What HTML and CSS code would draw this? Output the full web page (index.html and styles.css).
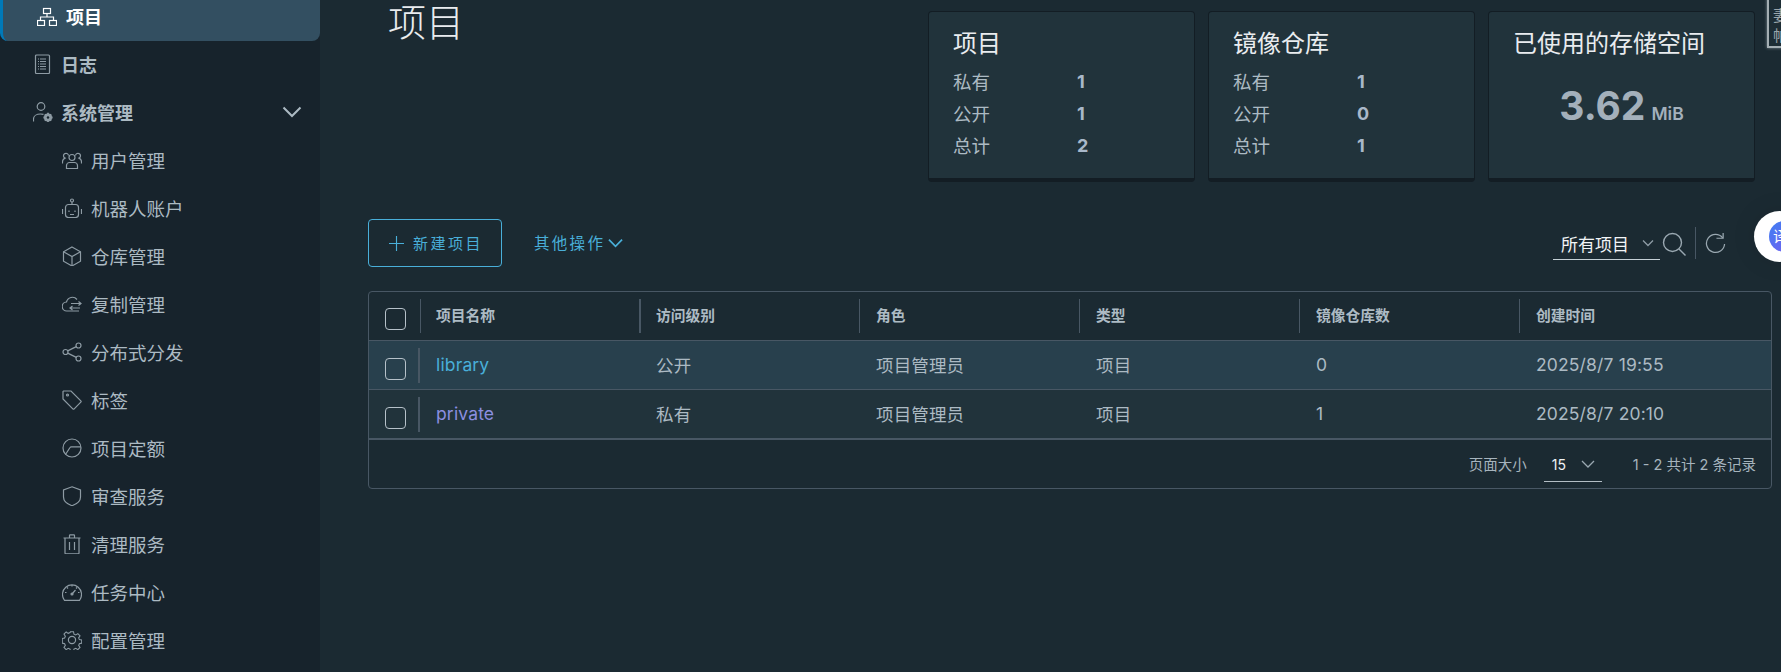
FILE: index.html
```html
<!DOCTYPE html>
<html lang="zh-CN">
<head>
<meta charset="utf-8">
<title>项目</title>
<link rel="stylesheet" href="styles.css">
</head>
<body>
<div class="app">
  <nav class="side">
    <a class="item top active"><svg class="ico" viewBox="0 0 20 20"><rect x="6.5" y="2.5" width="7" height="5"/><path d="M10 7.5v3.5M3.5 14v-3h13v3"/><rect x=".5" y="14.5" width="7" height="5"/><rect x="12.5" y="14.5" width="7" height="5"/></svg><span>项目</span></a>
    <a class="item top"><svg class="ico" viewBox="0 0 20 20"><rect x="2.5" y="1" width="14" height="18.5" rx="1"/><path d="M7 5h6M7 7.5h6M7 10h6M7 12.5h6M7 15h6M5 5h1M5 7.5h1M5 10h1M5 12.5h1M5 15h1"/></svg><span>日志</span></a>
    <a class="item top"><svg class="ico" viewBox="0 0 20 20"><circle cx="8" cy="4.5" r="3.8"/><path d="M.5 19.5v-2.5c0-3 3-5 7-5 1 0 2 .1 3 .4"/><circle class="solid" cx="15" cy="15.5" r="3.4"/><circle class="hole" cx="15" cy="15.5" r="1.2"/><path class="thick" d="M15 10.800v2M15 18v2M10.400 15.500h2M17.600 15.500h2M11.800 12.300l1.400 1.400M16.800 17.300l1.400 1.400M11.800 18.700l1.400-1.400M16.800 13.700l1.400-1.400"/></svg><span>系统管理</span><svg class="chev" viewBox="0 0 20 12"><path d="M1.500 1.500 10 10l8.500-8.500"/></svg></a>
    <a class="item sub"><svg class="ico" viewBox="0 0 20 20"><circle cx="10" cy="7.500" r="3"/><path d="M4.500 18.500v-3c0-1.500 1.500-3 3-3h5c1.500 0 3 1.500 3 3v3z"/><path d="M6.500 5.500a2.500 2.500 0 1 0-3.500 2.600c-1.500.7-2.500 2-2.500 3.700v1.700M13.500 5.500a2.500 2.500 0 1 1 3.500 2.600c1.500.7 2.500 2 2.500 3.700v1.700"/></svg><span>用户管理</span></a>
    <a class="item sub"><svg class="ico" viewBox="0 0 20 20"><rect x="3.500" y="6.500" width="13" height="13" rx="3"/><circle cx="10" cy="2.500" r="1.500"/><path d="M10 4v2.500M.5 11v5M19.500 11v5M7 12.500v1.500M13 12.500v1.500M8 16.500h4"/></svg><span>机器人账户</span></a>
    <a class="item sub"><svg class="ico" viewBox="0 0 20 20"><path d="M10 1l8.500 4.800v9.400L10 20l-8.500-4.800V5.800z"/><path d="M1.500 5.800 10 10.500l8.500-4.700M10 10.500V20"/></svg><span>仓库管理</span></a>
    <a class="item sub"><svg class="ico" viewBox="0 0 20 20"><path d="M17 17H5a4.500 4.500 0 0 1-.5-9A6 6 0 0 1 15 5.500"/><path d="M9 9.500h10M16.500 7.500l2.500 2-2.500 2M18 14H8M10.500 12 8 14l2.500 2"/></svg><span>复制管理</span></a>
    <a class="item sub"><svg class="ico" viewBox="0 0 20 20"><circle cx="16.500" cy="3.500" r="2.500"/><circle cx="3.500" cy="10" r="2.500"/><circle cx="16.500" cy="16.500" r="2.500"/><path d="M14.300 4.600 5.700 8.900M5.700 11.100l8.600 4.300"/></svg><span>分布式分发</span></a>
    <a class="item sub"><svg class="ico" viewBox="0 0 20 20"><path d="M1.500 1h7.500l9.800 9.800c.4.400.4 1 0 1.400l-6.600 6.600c-.4.400-1 .4-1.400 0L1 9V1.500z"/><circle cx="5.500" cy="5" r="1"/></svg><span>标签</span></a>
    <a class="item sub"><svg class="ico" viewBox="0 0 20 20"><circle cx="10" cy="10" r="9"/><path d="M3.500 16.500 8 9.500c.3-.5.800-.7 1.300-.7H19"/></svg><span>项目定额</span></a>
    <a class="item sub"><svg class="ico" viewBox="0 0 20 20"><path d="M10 .8 18.500 4v7c0 4-3.500 7-8.500 8.700C5 18 1.500 15 1.500 11V4z"/></svg><span>审查服务</span></a>
    <a class="item sub"><svg class="ico" viewBox="0 0 20 20"><path d="M1.500 4h17M7.500 4V1.500c0-.5.300-.7.700-.7h3.600c.4 0 .7.200.7.700V4M3 4v15c0 .5.300.8.800.8h12.400c.5 0 .8-.3.800-.8V4M7.500 8v8M12.500 8v8"/></svg><span>清理服务</span></a>
    <a class="item sub"><svg class="ico" viewBox="0 0 20 20"><path d="M2 17.500A9.500 9.500 0 1 1 18 17.500l-.5.800H2.500z"/><path d="M10 12l3.500-4M10 3v1.500M3 10.500h1.500M16 10.500h1.500M5 5.500l1 1M15 5.500l-1 1"/><circle class="solid" cx="10" cy="12" r="1"/></svg><span>任务中心</span></a>
    <a class="item sub"><svg class="ico" viewBox="0 0 20 20"><circle cx="10" cy="10" r="3.600"/><path d="M8.300.8h3.400l.5 2.700 2 .9 2.300-1.500 2.400 2.400-1.500 2.300.8 2 2.600.5v3.400l-2.600.6-.8 1.900 1.500 2.300-2.400 2.400-2.300-1.500-2 .9-.5 2.600H8.300l-.5-2.600-2-.9-2.300 1.500-2.400-2.400 1.500-2.300-.8-1.900-2.600-.6V8.300l2.600-.5.800-2L1.100 3.500l2.400-2.400 2.300 1.500 2-.9z" transform="translate(1 1) scale(.9)"/></svg><span>配置管理</span></a>
  </nav>

  <main class="main">
    <header class="head">
      <h1 class="title">项目</h1>
      <div class="cards">
        <section class="card">
          <h2>项目</h2>
          <dl class="stat"><dt>私有</dt><dd>1</dd><dt>公开</dt><dd>1</dd><dt>总计</dt><dd>2</dd></dl>
        </section>
        <section class="card">
          <h2>镜像仓库</h2>
          <dl class="stat"><dt>私有</dt><dd>1</dd><dt>公开</dt><dd>0</dd><dt>总计</dt><dd>1</dd></dl>
        </section>
        <section class="card">
          <h2>已使用的存储空间</h2>
          <p class="usage"><b>3.62</b><span>MiB</span></p>
        </section>
      </div>
    </header>

    <div class="toolbar">
      <button class="new"><svg class="plus" viewBox="0 0 16 16"><path d="M8 0v16M0 8h16"/></svg>新建项目</button>
      <button class="more">其他操作<svg class="more-chev" viewBox="0 0 16 10"><path d="M1 1.500 8 8.500l7-7"/></svg></button>
      <div class="tools">
        <div class="filter"><span>所有项目</span><svg class="filter-chev" viewBox="0 0 12 8"><path d="M1 1.500 6 6.500l5-5"/></svg></div>
        <svg class="search" viewBox="0 0 24 24"><circle cx="10.500" cy="10.500" r="9"/><path d="M17 17l6.500 6.500"/></svg>
        <i class="tool-sep"></i>
        <svg class="refresh" viewBox="0 0 22 22"><path d="M18.500 5A9.500 9.500 0 1 0 20.500 11.500"/><path d="M12 5.500h7V0"/></svg>
      </div>
    </div>

    <div class="table">
      <div class="row thead">
        <div class="check"><i class="box"></i></div>
        <div class="cell first">项目名称</div><div class="cell wide">访问级别</div><div class="cell">角色</div><div class="cell">类型</div><div class="cell">镜像仓库数</div><div class="cell">创建时间</div>
      </div>
      <div class="row tr hover">
        <div class="check"><i class="box"></i></div>
        <div class="cell first"><a class="link">library</a></div><div class="cell">公开</div><div class="cell">项目管理员</div><div class="cell">项目</div><div class="cell">0</div><div class="cell">2025/8/7 19:55</div>
      </div>
      <div class="row tr last">
        <div class="check"><i class="box"></i></div>
        <div class="cell first"><a class="link seen">private</a></div><div class="cell">私有</div><div class="cell">项目管理员</div><div class="cell">项目</div><div class="cell">1</div><div class="cell">2025/8/7 20:10</div>
      </div>
      <div class="foot">
        <span>页面大小</span>
        <div class="size"><span>15</span><svg class="size-chev" viewBox="0 0 14 8"><path d="M1 1 7 7l6-6"/></svg></div>
        <span class="count">1 - 2 共计 2 条记录</span>
      </div>
    </div>
  </main>
</div>
<div class="corner"><span>妻</span><span>帕</span></div>
<div class="float"><span class="badge">译</span></div>
</body>
</html>
```
FILE: styles.css
```css
* { box-sizing: border-box; }
html, body { margin: 0; height: 100%; overflow: hidden; background: #1b2a32; }
body { font-family: Inter, "Noto Sans CJK SC", sans-serif; color: #acbac3; }
.app { display: flex; height: 672px; overflow: hidden; }

.side { width: 320px; flex: none; height: 672px; background: #17232c; overflow: hidden; }
.item { display: flex; align-items: center; height: 48px; padding-bottom: 3px; font-size: 18.500px; color: #acbac3; }
.item:first-child { margin-top: -7px; }
.top { padding-left: 33px; font-size: 18px; font-weight: 700; gap: 8px; padding-right: 18px; }
.sub { padding-left: 62px; gap: 9px; font-weight: 400; }
.active { background: #334f61; color: #fff; border-left: 3px solid #0079b8; border-radius: 0 0 8px 8px; padding-left: 34px; gap: 9px; }
.ico { width: 20px; height: 20px; flex: none; fill: none; stroke: currentColor; stroke-width: 1.200; opacity: .8; }
.active .ico { opacity: 1; }
.solid { fill: currentColor; }
.hole { fill: #17232c; stroke: none; }
.thick { stroke-width: 1.800; }
.chev { width: 20px; height: 12px; margin-left: auto; fill: none; stroke: #acbac3; stroke-width: 2; }

.main { flex: 1; min-width: 0; padding: 0 9px 0 48px; }
.head { display: flex; justify-content: space-between; align-items: flex-start; padding-right: 17px; height: 182px; padding-top: 11px; }
.title { margin: -11px 0 0 20px; font-size: 38px; line-height: 44px; font-weight: 300; color: #e9ecef; }
.cards { display: flex; gap: 13px; }
.card { width: 267px; height: 171px; background: #21333b; border: 1px solid #131d24; border-bottom-width: 4px; border-radius: 4px; padding: 14px 24px 0; }
.card h2 { margin: 0 0 4px; font-size: 24px; line-height: 36px; font-weight: 400; color: #e9ecef; white-space: nowrap; }
.stat { display: grid; grid-template-columns: 124px 1fr; margin: 0; font-size: 18.500px; line-height: 32px; }
.stat dt { font-weight: 400; }
.stat dd { margin: 0; font-size: 18px; font-weight: 700; color: #a9b8c9; }
.usage { display: flex; align-items: baseline; justify-content: center; gap: 6px; margin: 19px 0 0; color: #a3b0bb; font-weight: 600; }
.usage b { font-size: 39px; line-height: 50px; font-weight: 700; }
.usage span { font-size: 17.500px; font-weight: 600; }

.toolbar { display: flex; align-items: center; height: 48px; margin-top: 37px; padding-right: 46px; }
button { background: none; font: inherit; color: #49afd9; }
.new { display: flex; align-items: center; gap: 9px; width: 134px; height: 48px; padding: 0 0 2px 20px; border: 1px solid #49afd9; border-radius: 4px; font-size: 15px; letter-spacing: 2.500px; white-space: nowrap; }
.plus { width: 15px; height: 15px; flex: none; margin-top: 2px; fill: none; stroke: #49afd9; stroke-width: 1.200; }
.more { display: flex; align-items: center; gap: 3px; margin-left: 32px; padding: 0 0 2px; border: 0; font-size: 15.500px; letter-spacing: 2.300px; white-space: nowrap; }
.more-chev { width: 15px; height: 10px; margin-top: 1px; fill: none; stroke: #49afd9; stroke-width: 1.800; }
.tools { display: flex; align-items: center; margin-left: auto; }
.filter { display: flex; align-items: center; justify-content: space-between; width: 107px; height: 30px; padding: 0 6px 3px 8px; margin: 4px -1px 0 1px; border-bottom: 1px solid #c5d0d6; color: #f2f5f7; font-size: 17px; }
.filter-chev { width: 12px; height: 8px; fill: none; stroke: #8e9ca6; stroke-width: 1.300; }
.search { width: 24px; height: 24px; margin: 2px 0 0 3px; fill: none; stroke: #9aa8b1; stroke-width: 1.400; }
.tool-sep { width: 1px; height: 32px; margin: 0 9px 0 9px; background: #485764; }
.refresh { width: 21px; height: 21px; fill: none; stroke: #9aa8b1; stroke-width: 1.300; }

.table { margin-top: 24px; height: 198px; border: 1px solid #485764; border-radius: 4px; overflow: hidden; font-size: 16px; }
.row { display: grid; grid-template-columns: 51px 219px 220px 220px 220px 220px 1fr; align-items: center; height: 49px; border-bottom: 1px solid #485764; }
.thead { height: 49px; font-size: 14.750px; font-weight: 700; color: #adbbc4; }
.thead .cell { padding-bottom: 4px; }
.tr { background: #21333b; }
.tr.hover { background: #28404d; }
.tr.last { height: 50px; border-bottom-width: 2px; }
.check { display: flex; justify-content: flex-start; padding: 6px 0 0 16px; }
.box { display: block; width: 21px; height: 22px; border: 1px solid #b6c1c9; border-radius: 4px; }
.tr .check { padding-top: 8px; }
.cell { display: flex; align-items: center; height: 34px; padding-left: 16px; border-left: 1px solid #485764; white-space: nowrap; }
.first { padding-left: 15px; }
.wide { border-left-width: 2px; padding-left: 15px; }
.tr .cell { border-left: 0; padding: 0 0 1px 17px; font-size: 17.500px; letter-spacing: .15px; }
.tr .first { border-left: 2px solid #485764; margin-left: -2px; height: 35px; padding: 0 0 1px 16px; }
.link { color: #49afd9; }
.seen { color: #8c8fe0; }
.foot { display: flex; align-items: center; justify-content: flex-end; height: 49px; padding: 0 15px 3px 0; font-size: 14.500px; color: #a6b4bd; }
.size { display: flex; align-items: center; justify-content: space-between; width: 58px; height: 34px; margin: 3px 31px 0 17px; padding: 0 7px 0 8px; border-bottom: 1px solid #b3bec5; color: #eef2f4; font-size: 14px; }
.size-chev { width: 14px; height: 8px; fill: none; stroke: #9aa8b1; stroke-width: 1.300; }

.corner { position: absolute; left: 1767px; top: -6px; width: 30px; height: 54px; padding: 10px 0 0 4px; background: #1d2d35; border: 2px solid #a4aeb3; box-shadow: 0 0 3px #7d8a91; color: #9aa6ac; font-size: 15px; line-height: 20px; }
.corner span { display: block; }
.float { position: absolute; left: 1754px; top: 211px; width: 51px; height: 51px; border-radius: 50%; background: #fff; box-shadow: 0 0 24px rgba(0,0,0,.1); }
.badge { position: absolute; left: 15px; top: 10px; width: 31px; height: 31px; border-radius: 50%; background: linear-gradient(135deg, #3f7ff2, #7a5cf0); color: #fff; font-size: 15px; line-height: 31px; padding-left: 4px; }
```
